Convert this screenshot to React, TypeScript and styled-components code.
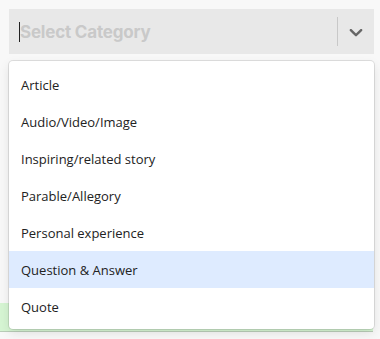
import React from 'react';
import styled, { createGlobalStyle } from 'styled-components';

const GlobalStyle = createGlobalStyle`
  html, body {
    margin: 0;
    padding: 0;
    background: #f8f8f8;
  }
  body {
    font-family: 'Open Sans', 'Noto Sans', sans-serif;
  }
`;

const categories = [
  'Article',
  'Audio/Video/Image',
  'Inspiring/related story',
  'Parable/Allegory',
  'Personal experience',
  'Question & Answer',
  'Quote',
];

const Page = styled.div`
  width: 380px;
  height: 339px;
  padding: 9px 6px 0 9px;
  box-sizing: border-box;
  overflow: hidden;
`;

const Field = styled.div`
  position: relative;
`;

const Control = styled.div`
  display: flex;
  align-items: center;
  height: 45px;
  background: #e8e8e8;
`;

const ValueArea = styled.div`
  flex: 1;
  display: flex;
  align-items: center;
  padding-left: 10px;
`;

const Caret = styled.span`
  width: 1px;
  height: 20px;
  background: #222;
`;

const Placeholder = styled.span`
  font-family: Inter, 'Liberation Sans', sans-serif;
  font-weight: 700;
  font-size: 17px;
  color: #c9c9c9;
  letter-spacing: -0.2px;
`;

const Separator = styled.span`
  align-self: stretch;
  width: 1px;
  margin: 8px 0;
  background: #c8c8c8;
`;

const Indicator = styled.div`
  width: 36px;
  display: flex;
  align-items: center;
  justify-content: center;
  color: #666;
`;

const Menu = styled.div`
  position: absolute;
  top: 52px;
  left: 0;
  right: 0;
  z-index: 2;
  background: #fff;
  border-radius: 4px;
  padding: 5px 0 4px;
  box-shadow: 0 0 0 1px rgba(0, 0, 0, 0.1), 0 4px 11px rgba(0, 0, 0, 0.1);
`;

const Option = styled.div<{ $active?: boolean }>`
  height: 37px;
  display: flex;
  align-items: center;
  padding: 0 12px;
  font-size: 13px;
  color: #222;
  background: ${(p) => (p.$active ? '#deebff' : 'transparent')};
`;

const Notice = styled.div`
  margin: 249px 0 0 -9px;
  width: 373px;
  height: 28px;
  background: #d6f5d3;
  border-bottom: 1px solid #b9cdb8;
`;

export default function App() {
  return (
    <>
      <GlobalStyle />
      <Page>
        <Field>
          <Control>
            <ValueArea>
              <Caret />
              <Placeholder>Select Category</Placeholder>
            </ValueArea>
            <Separator />
            <Indicator>
              <svg width="22" height="22" viewBox="0 0 20 20" fill="currentColor">
                <path d="M4.516 7.548c.436-.446 1.043-.481 1.576 0L10 11.295l3.908-3.747c.533-.481 1.141-.446 1.574 0 .436.445.408 1.197 0 1.615-.406.418-4.695 4.502-4.695 4.502a1.095 1.095 0 0 1-1.576 0S4.924 9.581 4.516 9.163c-.409-.418-.436-1.17 0-1.615z" />
              </svg>
            </Indicator>
          </Control>
          <Menu>
            {categories.map((c) => (
              <Option key={c} $active={c === 'Question & Answer'}>
                {c}
              </Option>
            ))}
          </Menu>
          <Notice />
        </Field>
      </Page>
    </>
  );
}
